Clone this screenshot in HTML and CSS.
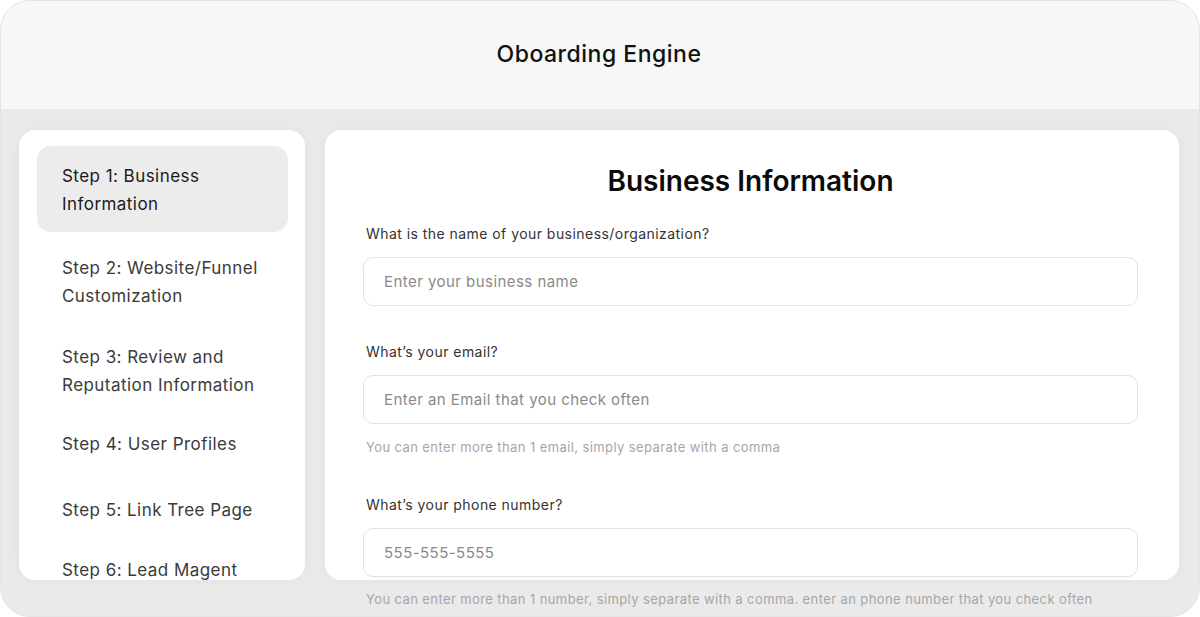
FILE: index.html
```html
<!DOCTYPE html>
<html lang="en">
<head>
<meta charset="utf-8">
<title>Oboarding Engine</title>
<link rel="stylesheet" href="styles.css">
</head>
<body>
<div class="frame">
  <header class="topbar">
    <div class="app-title">Oboarding Engine</div>
  </header>
  <div class="workspace">
    <nav class="steps">
      <div class="step active">Step 1: Business Information</div>
      <div class="step step-2">Step 2: Website/Funnel Customization</div>
      <div class="step step-3">Step 3: Review and Reputation Information</div>
      <div class="step step-4">Step 4: User Profiles</div>
      <div class="step step-5">Step 5: Link Tree Page</div>
      <div class="step step-6">Step 6: Lead Magent</div>
    </nav>
    <main class="form-card">
      <h1 class="form-title">Business Information</h1>
      <div class="field">
        <label class="field-label">What is the name of your business/organization?</label>
        <div class="input"><span class="placeholder">Enter your business name</span></div>
      </div>
      <div class="field field-2">
        <label class="field-label">What’s your email?</label>
        <div class="input"><span class="placeholder">Enter an Email that you check often</span></div>
        <div class="hint">You can enter more than 1 email, simply separate with a comma</div>
      </div>
      <div class="field field-3">
        <label class="field-label">What’s your phone number?</label>
        <div class="input"><span class="placeholder">555-555-5555</span></div>
        <div class="hint">You can enter more than 1 number, simply separate with a comma. enter an phone number that you check often</div>
      </div>
    </main>
  </div>
</div>
</body>
</html>
```
FILE: styles.css
```css
* { box-sizing: border-box; }
html, body { margin: 0; padding: 0; background: #ffffff; }
body {
  width: 1200px;
  height: 617px;
  overflow: hidden;
  font-family: "Inter", "Liberation Sans", sans-serif;
}
.frame {
  width: 1200px;
  height: 617px;
  border-radius: 30px;
  border: 1px solid #e4e4e4;
  overflow: hidden;
  background: #eaeaeb;
  display: flex;
  flex-direction: column;
}
.topbar {
  height: 108px;
  flex: none;
  background: #f7f7f7;
  display: flex;
  align-items: center;
  justify-content: center;
}
.app-title {
  font-size: 23px;
  font-weight: 500;
  letter-spacing: 0.5px;
  color: #111111;
  margin-top: -3px;
  margin-left: -2px;
}
.workspace {
  flex: 1;
  display: flex;
  gap: 20px;
  padding: 21px 20px 0 18px;
}
.steps {
  width: 286px;
  height: 450px;
  flex: none;
  background: #ffffff;
  border-radius: 16px;
  box-shadow: 0 0 18px rgba(0, 0, 0, 0.04);
  padding: 16px 17px 0 18px;
  overflow: hidden;
  display: flex;
  flex-direction: column;
  gap: 5px;
}
.step {
  padding: 16px 20px 14px 25px;
  font-size: 17px;
  line-height: 28px;
  letter-spacing: 0.45px;
  color: #3a3a3a;
  border-radius: 14px;
}
.step.active {
  padding-top: 16px;
  padding-bottom: 14px;
  background: #ececec;
  color: #1a1a1a;
}
.step-2 { margin-top: 1px; }
.step-3 { margin-top: -2px; }
.step-4 { margin-top: -4px; }
.step-5 { margin-top: 3px; }
.step-6 { margin-top: -3px; }
.form-card {
  flex: 1;
  height: 450px;
  background: #ffffff;
  border-radius: 16px;
  box-shadow: 0 0 18px rgba(0, 0, 0, 0.04);
  padding: 34px 41px 0 38px;
}
.form-title {
  margin: 0;
  text-align: center;
  font-size: 28px;
  line-height: 34px;
  font-weight: 600;
  color: #0b0b0b;
}
.field { margin-top: 26px; }
.field-2 { margin-top: 36px; }
.field-3 { margin-top: 39px; }
.field-label {
  display: block;
  padding-left: 3px;
  font-size: 14px;
  line-height: 20px;
  letter-spacing: 0.45px;
  color: #333333;
}
.input {
  margin-top: 13px;
  height: 49px;
  border: 1px solid #e2e2e2;
  border-radius: 10px;
  background: #ffffff;
  display: flex;
  align-items: center;
  padding-left: 20px;
}
.placeholder {
  font-size: 15px;
  letter-spacing: 0.45px;
  color: #8a8a8a;
}
.hint {
  margin-top: 14px;
  padding-left: 3px;
  font-size: 13px;
  line-height: 18px;
  letter-spacing: 0.4px;
  color: #a6a6a6;
  white-space: nowrap;
}
.field-3 .hint { margin-top: 13px; }
```
